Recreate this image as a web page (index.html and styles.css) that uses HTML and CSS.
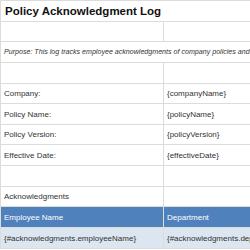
FILE: index.html
```html
<!DOCTYPE html>
<html>
<head>
<meta charset="utf-8">
<link rel="stylesheet" href="styles.css">
</head>
<body>
<table class="sheet">
  <colgroup><col class="c1"><col class="c2"><col class="c3"></colgroup>
  <tr class="tall"><td class="title" colspan="3">Policy Acknowledgment Log</td></tr>
  <tr class="short"><td></td><td></td><td></td></tr>
  <tr class="tall"><td class="purpose" colspan="3">Purpose: This log tracks employee acknowledgments of company policies and procedures.</td></tr>
  <tr class="tall"><td></td><td></td><td></td></tr>
  <tr class="short"><td>Company:</td><td>{companyName}</td><td></td></tr>
  <tr class="tall"><td>Policy Name:</td><td>{policyName}</td><td></td></tr>
  <tr class="short"><td>Policy Version:</td><td>{policyVersion}</td><td></td></tr>
  <tr class="tall"><td>Effective Date:</td><td>{effectiveDate}</td><td></td></tr>
  <tr class="tall"><td></td><td></td><td></td></tr>
  <tr class="short"><td>Acknowledgments</td><td></td><td></td></tr>
  <tr class="head tall"><td>Employee Name</td><td>Department</td><td>Date</td></tr>
  <tr class="data tall"><td>{#acknowledgments.employeeName}</td><td>{#acknowledgments.department}</td><td>{date}</td></tr>
</table>
</body>
</html>
```
FILE: styles.css
```css
html, body { margin: 0; padding: 0; background: #fff; }
.sheet {
  border-collapse: collapse;
  table-layout: fixed;
  width: 480px;
  font-family: "Liberation Sans", Arial, sans-serif;
  font-size: 8px;
  color: #333;
}
.c1 { width: 163px; }
.c2 { width: 163px; }
.c3 { width: 154px; }
.sheet td {
  border: 1px solid #dcdcdc;
  padding: 0 3px;
  white-space: nowrap;
  overflow: hidden;
  box-sizing: border-box;
}
.tall td { height: 21px; }
.short td { height: 20px; }
.sheet td.title {
  font-size: 11.5px;
  font-weight: bold;
  color: #111;
  padding-left: 4px;
}
.sheet td.purpose {
  font-style: italic;
  font-size: 7.1px;
  color: #333;
}
.head td {
  background: #4f81bd;
  color: #fff;
}
.data td { background: #dce6f1; }
```
